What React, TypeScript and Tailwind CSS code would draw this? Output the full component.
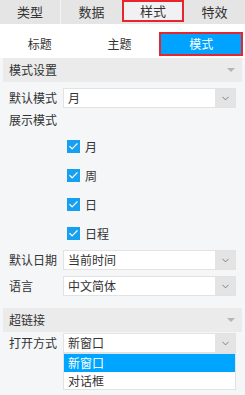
import { ChevronDown, Check } from 'lucide-react';

const font = { fontFamily: '"Noto Sans CJK SC", "Noto Sans", sans-serif' };

function SectionHeader({ title }: { title: string }) {
    return (
        <div className="flex items-center justify-between h-[24px] mx-[3px] px-[6px] bg-[#ebebeb] text-[12px] text-[#333]">
            <span>{title}</span>
            <span className="w-0 h-0 border-l-[4px] border-r-[4px] border-t-[4px] border-l-transparent border-r-transparent border-t-[#b5b5b5] mr-[1px]" />
        </div>
    );
}

function SelectRow({ label, value }: { label: string; value: string }) {
    return (
        <div className="flex items-center h-[20px] pl-[9px] pr-[9px] text-[12px] text-[#333]">
            <span className="w-[54px] shrink-0">{label}</span>
            <div className="flex flex-1 h-[20px] bg-white border border-[#e2e2e2]">
                <span className="flex-1 pl-[4px] leading-[18px]">{value}</span>
                <span className="w-[20px] bg-[#e4e4e4] flex items-center justify-center">
                    <ChevronDown className="w-[11px] h-[11px] text-[#555]" strokeWidth={1.5} />
                </span>
            </div>
        </div>
    );
}

function CheckItem({ label }: { label: string }) {
    return (
        <div className="flex items-center h-[13px] pl-[67px] text-[12px] text-[#333] gap-[5px]">
            <span className="w-[13px] h-[13px] bg-[#18a0f0] flex items-center justify-center">
                <Check className="w-[11px] h-[11px] text-white" strokeWidth={2.5} />
            </span>
            <span>{label}</span>
        </div>
    );
}

export default function App() {
    return (
        <div className="w-[245px] h-[395px] bg-[#f5f6f8] overflow-hidden" style={font}>
            {/* top tabs */}
            <div className="flex h-[24px] bg-[#e5e5e5] text-[13px] text-[#333]">
                <div className="w-[61px] flex items-center justify-center border-r border-[#f4f4f4]">类型</div>
                <div className="w-[61px] flex items-center justify-center">数据</div>
                <div className="w-[62px] h-[22px] flex items-center justify-center bg-[#f1f1f3] border-2 border-[#e8242c]">样式</div>
                <div className="flex-1 flex items-center justify-center">特效</div>
            </div>

            {/* sub tabs */}
            <div className="flex bg-white pt-[8px] pb-[2px] pr-[2px] text-[12px] text-[#333]">
                <div className="flex-1 h-[24px] flex items-center justify-center">标题</div>
                <div className="flex-1 h-[24px] flex items-center justify-center">主题</div>
                <div className="flex-1 h-[24px] flex items-center justify-center bg-[#00a3ff] text-white border-2 border-[#e8242c]">模式</div>
            </div>

            <div>
                <SectionHeader title="模式设置" />
                <div className="mt-[6px]">
                    <SelectRow label="默认模式" value="月" />
                </div>
                <div className="pl-[9px] mt-[2px] text-[12px] text-[#333] h-[20px] leading-[20px]">展示模式</div>
                <div className="flex flex-col gap-[16px] mt-[10px]">
                    <CheckItem label="月" />
                    <CheckItem label="周" />
                    <CheckItem label="日" />
                    <CheckItem label="日程" />
                </div>
                <div className="mt-[10px] flex flex-col gap-[6px]">
                    <SelectRow label="默认日期" value="当前时间" />
                    <SelectRow label="语言" value="中文简体" />
                </div>
                <div className="mt-[12px]">
                    <SectionHeader title="超链接" />
                </div>
                <div className="mt-[1px]">
                    <SelectRow label="打开方式" value="新窗口" />
                </div>
                <div className="ml-[63px] mr-[9px] bg-white border border-[#e2e2e2] text-[12px]">
                    <div className="h-[18px] leading-[18px] pl-[4px] bg-[#00a5ff] text-white">新窗口</div>
                    <div className="h-[17px] leading-[17px] pl-[4px] text-[#333]">对话框</div>
                </div>
            </div>
        </div>
    );
}
